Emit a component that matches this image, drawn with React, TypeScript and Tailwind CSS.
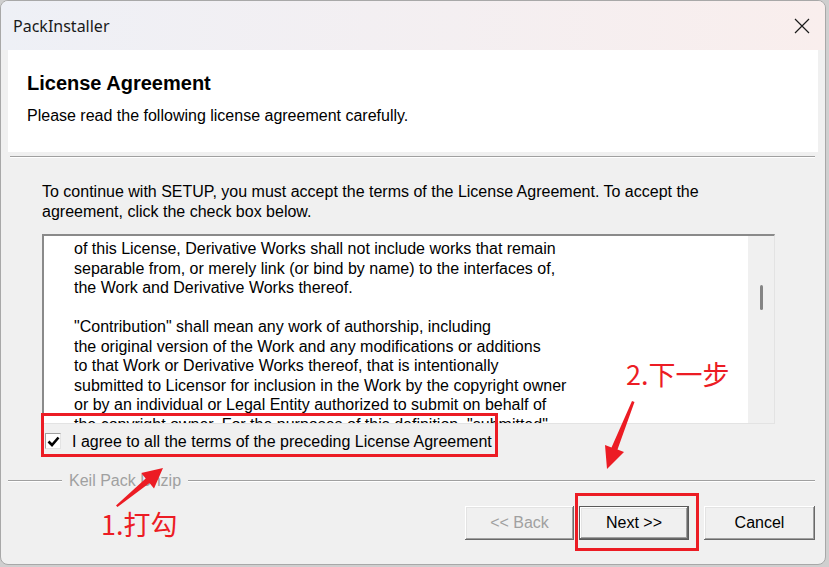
import React from "react";

const lines = [
  "of this License, Derivative Works shall not include works that remain",
  "separable from, or merely link (or bind by name) to the interfaces of,",
  "the Work and Derivative Works thereof.",
  "",
  "\"Contribution\" shall mean any work of authorship, including",
  "the original version of the Work and any modifications or additions",
  "to that Work or Derivative Works thereof, that is intentionally",
  "submitted to Licensor for inclusion in the Work by the copyright owner",
  "or by an individual or Legal Entity authorized to submit on behalf of",
  "the copyright owner. For the purposes of this definition, \"submitted\"",
];

const btnShadow =
  "shadow-[inset_-1px_-1px_0_#696969,inset_1px_1px_0_#ffffff,inset_-2px_-2px_0_#a0a0a0,inset_2px_2px_0_#e3e3e3]";

export default function App() {
  return (
    <div
      className="relative w-[829px] h-[567px] overflow-hidden bg-[#cfcfcf] text-black"
      style={{ fontFamily: '"Liberation Sans", Arial, sans-serif' }}
    >
      <div className="w-[826px] h-[565px] rounded-[8px] border border-[#a8a8a8] bg-[#f0f0f0] overflow-hidden flex flex-col">
        {/* Title bar */}
        <div className="h-[49px] shrink-0 flex items-center justify-between pl-[12px] pr-[15px] bg-gradient-to-r from-[#eef0f6] to-[#f9eeed]">
          <span
            className="text-[16px] leading-[20px] text-[#1a1a1a]"
            style={{ fontFamily: '"Noto Sans", "Open Sans", sans-serif' }}
          >
            PackInstaller
          </span>
          <svg width="16" height="16" viewBox="0 0 16 16">
            <path d="M1 1 L15 15 M15 1 L1 15" stroke="#1a1a1a" strokeWidth="1.2" fill="none" />
          </svg>
        </div>

        {/* Header */}
        <div className="mx-[7px] h-[102px] shrink-0 bg-white pl-[19px] pt-[21px]">
          <div className="text-[20px] leading-[24px] font-bold">License Agreement</div>
          <div className="mt-[11px] text-[16px] leading-[20px]">
            Please read the following license agreement carefully.
          </div>
        </div>

        {/* separator */}
        <div className="mt-[4px] ml-[9px] mr-[10px] h-[2px] border-t border-t-[#a0a0a0] border-b border-b-white" />

        {/* intro */}
        <div className="mt-[24px] pl-[41px] text-[16px] leading-[20px]">
          To continue with SETUP, you must accept the terms of the License Agreement. To accept the
          <br />
          agreement, click the check box below.
        </div>

        {/* Text box */}
        <div className="mt-[12px] ml-[41px] w-[733px] h-[190px] shrink-0 flex border-t-2 border-l-2 border-t-[#8a8a8a] border-l-[#8a8a8a] border-b border-r border-b-[#e3e3e3] border-r-[#e3e3e3] bg-white overflow-hidden">
          <div className="flex-1 pl-[30px] pt-[3px] text-[16px] leading-[19.5px] whitespace-pre overflow-hidden">
            {lines.map((l, i) => (
              <div key={i} className="h-[19.5px]">
                {l}
              </div>
            ))}
          </div>
          <div className="w-[26px] bg-[#f0f0f0] flex justify-center pt-[49px]">
            <div className="w-[3px] h-[25px] rounded-full bg-[#858585]" />
          </div>
        </div>

        {/* Checkbox row */}
        <div className="mt-[9px] ml-[44px] flex items-center h-[16px]">
          <div className="w-[16px] h-[16px] bg-white border border-t-[#a0a0a0] border-l-[#a0a0a0] border-b-[#e3e3e3] border-r-[#e3e3e3] flex items-center justify-center">
            <svg width="13" height="13" viewBox="0 0 13 13">
              <path d="M1.5 6.5 L5 10 L11.5 2.5" stroke="#000" strokeWidth="2.6" fill="none" />
            </svg>
          </div>
          <span className="ml-[11px] text-[16px] leading-[20px] mt-[2px]">
            I agree to all the terms of the preceding License Agreement
          </span>
        </div>

        {/* Group separator */}
        <div className="mt-[22px] ml-[7px] mr-[10px] flex items-center h-[20px]">
          <div className="w-[54px] h-[2px] border-t border-t-[#a0a0a0] border-b border-b-white" />
          <span className="mx-[7px] text-[16px] leading-[20px] text-[#a0a0a0]">Keil Pack Unzip</span>
          <div className="flex-1 h-[2px] border-t border-t-[#a0a0a0] border-b border-b-white" />
        </div>

        {/* Buttons */}
        <div className="mt-[15px] flex justify-end pr-[10px] text-[16px]">
          <div className={`w-[109px] h-[34px] flex items-center justify-center bg-[#f0f0f0] text-[#a0a0a0] ${btnShadow}`}>
            &lt;&lt; Back
          </div>
          <div className="ml-[5px] w-[110px] h-[34px] border border-[#5a5a5a] bg-[#f0f0f0]">
            <div className={`w-full h-full flex items-center justify-center ${btnShadow}`}>Next &gt;&gt;</div>
          </div>
          <div className={`ml-[15px] w-[111px] h-[34px] flex items-center justify-center bg-[#f0f0f0] ${btnShadow}`}>
            Cancel
          </div>
        </div>
      </div>

      {/* Annotations */}
      <div className="absolute left-[41px] top-[413px] w-[457px] h-[44px] border-[3px] border-[#ec1c24]" />
      <div className="absolute left-[575px] top-[493px] w-[124px] h-[58px] border-[3px] border-[#ec1c24]" />
      <div
        className="absolute left-[626px] top-[359px] text-[27px] leading-[29px] text-[#ec1c24]"
        style={{ fontFamily: '"Noto Sans CJK SC", sans-serif' }}
      >
        2.下一步
      </div>
      <div
        className="absolute left-[101px] top-[509px] text-[27px] leading-[29px] text-[#ec1c24]"
        style={{ fontFamily: '"Noto Sans CJK SC", sans-serif' }}
      >
        1.打勾
      </div>
      <svg className="absolute left-0 top-0 pointer-events-none" width="829" height="567">
        <polygon
          points="632,401 634.5,402 617.5,449.5 624,452 607,469 605,445 611.5,447.4"
          fill="#ec1c24"
        />
        <polygon
          points="116,505.5 145.7,478.4 141.2,473 163,468 154,488.4 149.5,483 117.5,507"
          fill="#ec1c24"
        />
      </svg>
    </div>
  );
}
